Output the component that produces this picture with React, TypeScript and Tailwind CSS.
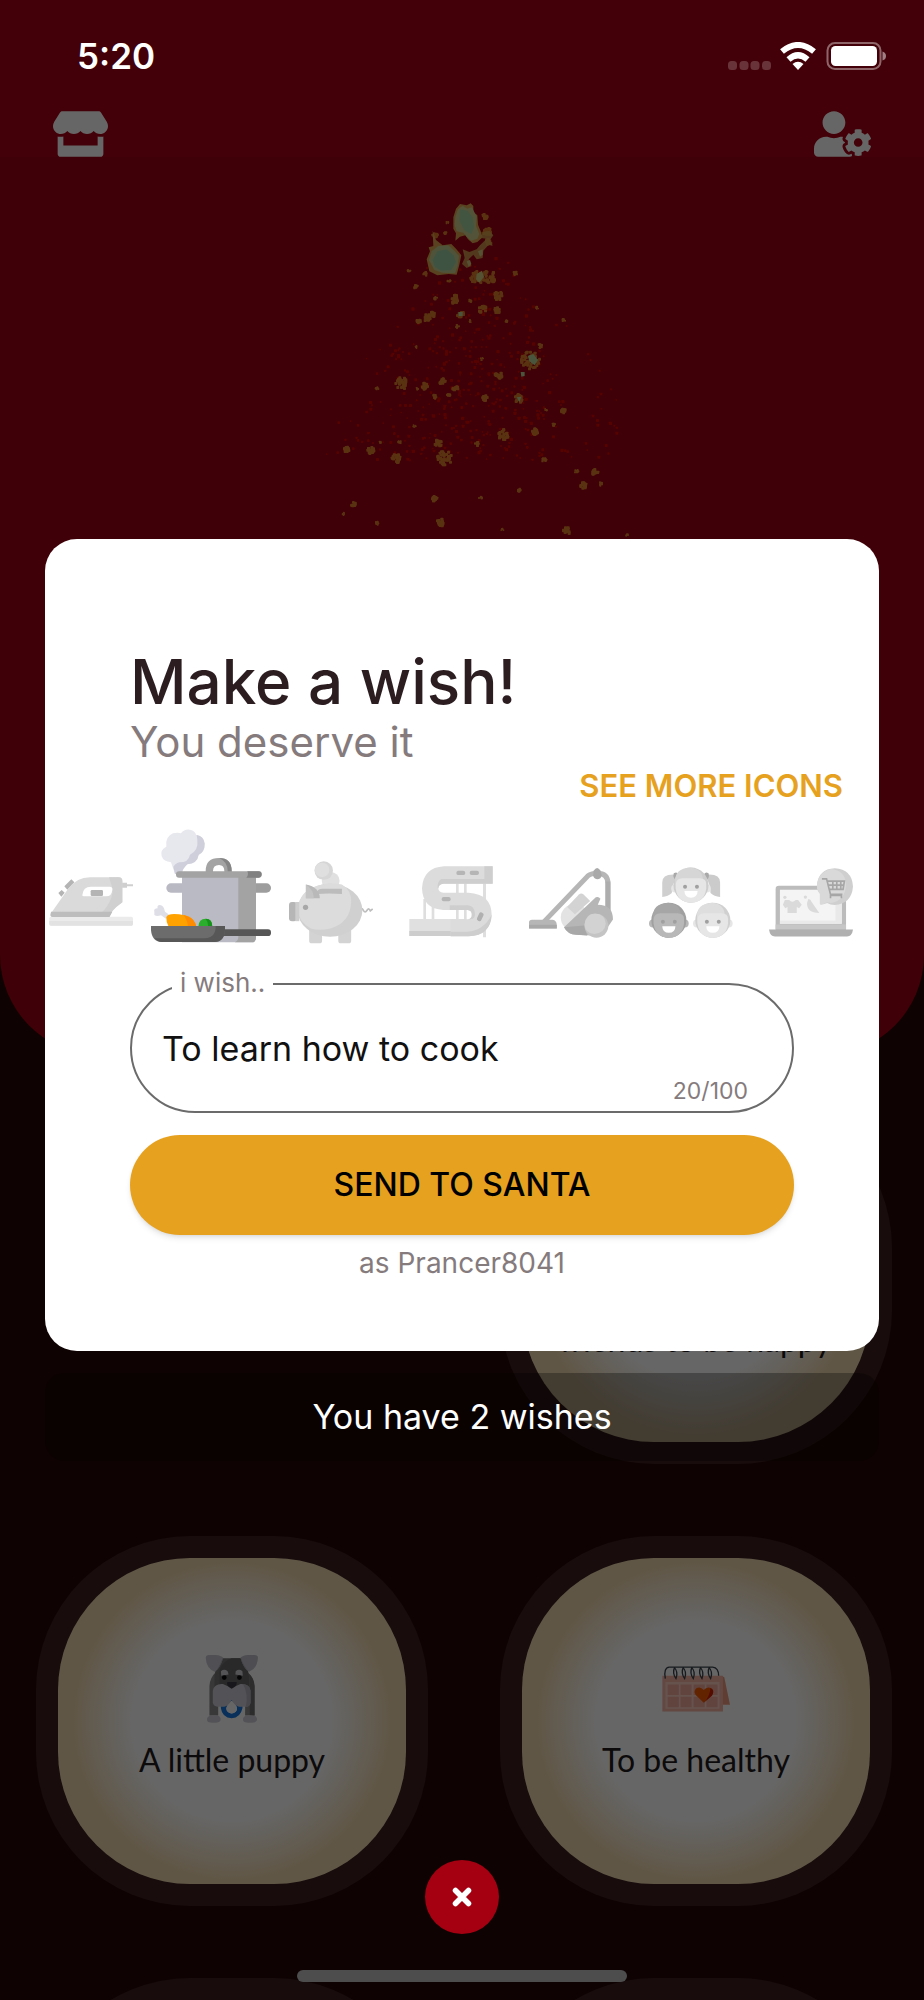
import { useState } from 'react';
import type { ReactNode } from 'react';
import { FaStore, FaUserCog } from 'react-icons/fa';

interface IconOption {
  id: string;
  label: string;
  icon: ReactNode;
}

interface Wish {
  id: number;
  text: string;
  icon?: ReactNode;
  className?: string;
  contentClassName?: string;
}

const MAX_LENGTH = 100;

/* ---------- Wish icons ---------- */

const IronIcon = () => (
  <svg viewBox="27 153 252 252" className="w-full">
    <rect x="28" y="323" width="251" height="27" rx="5" fill="#ebebeb" />
    <path d="M28 336h251v9q0 5-5 5H33q-5 0-5-5z" fill="#e2e2e2" />
    <path d="M245 221h16v5h18v6h-18v4h-16z" fill="#cfcfcf" />
    <path d="M55 252l10-9 9 8-10 12z M73 232l21-21 9 9-21 22z" fill="#b4b4b4" />
    <path d="M31 316L84 240Q110 205 150 205h86q11 0 11 11v64q-20 14-30 26l-9 18H38q-9 0-7-8z" fill="#dadada" />
    <path d="M207 205h29q11 0 11 11v64q-20 14-30 26l-9 18h-40q28-18 40-44 10-18 10-40z" fill="#d0d0d0" />
    <path d="M33 308h184l-9 16H38q-9 0-5-16z" fill="#bdbdbd" />
    <path d="M127 258q2-25 26-25h56q9 0 8 9-2 20-18 20h-67q-6 0-5-4z" fill="#fff" />
    <rect x="152" y="243" width="37" height="18" rx="4" fill="#b4b4b4" />
  </svg>
);

const PotIcon = () => (
  <svg viewBox="333 45 360 360" className="w-full">
    <path d="M405 195l-12-35q-22-2-28-18-5-20 14-29-4-30 20-40 14-4 24 0 12-15 30-10 12 4 15 14 22 3 26 26 2 25-18 35-4 24-34 28-14 12-17 29z" fill="#e7e7ee" />
    <path d="M470 78q22 4 24 26 0 25-18 33-4 27-34 29-14 12-17 29h-20l-5-22q10-12 18-13 28 0 32-23 26-12 22-44-1-9-2-15z" fill="#cfcfdb" />
    <path d="M497 192v-6q0-39 40-39 38 0 38 39v6h-22v-6q0-18-16-18-18 0-18 18v6z" fill="#a3a3a3" />
    <path d="M537 147q38 0 38 39v6h-12v-6q0-28-26-39z" fill="#848484" />
    <rect x="379" y="223" width="60" height="28" rx="14" fill="#b9b9c3" />
    <rect x="632" y="223" width="61" height="28" rx="14" fill="#9d9d9d" />
    <path d="M426 204h222v182q0 14-14 14H426z" fill="#babac5" />
    <path d="M595 204h53v182q0 14-14 14h-50q11-4 11-16z" fill="#a3a3a3" />
    <rect x="408" y="187" width="257" height="19" rx="9" fill="#a3a3a3" />
    <path d="M622 187h34q9 0 9 9t-9 10h-37q8-8 3-19z" fill="#818181" />
    <path d="M343 309q-3-11 10-11-3-9 6-10 8 0 13 10l3 10 11 8-7 14-16-11q-13 5-20-1z" fill="#dedee7" />
    <path d="M379 325q4-13 38-9 38 3 48 25 4 8 3 12h-82q-8-15-7-28z" fill="#ffa200" />
    <path d="M430 318q28 5 36 25 3 7 2 10h-24q-2-22-14-35z" fill="#ff8b00" />
    <path d="M475 353q1-24 22-24 20 0 20 24z" fill="#2bae2b" />
    <path d="M497 329q20 0 20 24h-12q0-14-8-24z" fill="#16921b" />
    <path d="M548 361h136q9 0 9 10t-9 10H548z" fill="#575757" />
    <path d="M333 351h222v12q-2 36-32 36H366q-30 0-33-36z" fill="#6c6c6c" />
    <path d="M527 351h28v12q-2 36-32 36H366q-14 0-22-11h150q34-2 33-37z" fill="#575757" />
  </svg>
);

const PiggyIcon = () => (
  <svg viewBox="747 153 254 252" className="w-full">
    <circle cx="873" cy="213" r="27" fill="#e0e0e0" />
    <circle cx="852" cy="182" r="28" fill="#d6d6d6" />
    <circle cx="847" cy="180" r="22" fill="#dfdfdf" />
    <path d="M959 302q8-10 13 0t11 0q6-9 10 2l7-6" fill="none" stroke="#bdbdbd" strokeWidth="5" />
    <path d="M808 355h39v39q0 8-8 8h-23q-8 0-8-8z M896 350h39v44q0 8-8 8h-23q-8 0-8-8z" fill="#d3d3d3" />
    <ellipse cx="871" cy="302" rx="98" ry="80" fill="#d0d0d0" />
    <path d="M773 300q4-62 74-76 32-6 60 0 30 18 28 54-3 64-66 80-32 6-56-1-36-18-40-57z" fill="#dcdcdc" />
    <path d="M831 252q0-15 18-15h58v16q-38-4-76 0z" fill="#bcbcbc" />
    <path d="M798 224q42 8 42 42h-42z" fill="#b9b9b9" />
    <path d="M798 224q24 16 24 42h-24z" fill="#c4c4c4" />
    <rect x="747" y="277" width="24" height="58" rx="9" fill="#b6b6b6" />
    <path d="M766 277h12v58h-12z" fill="#cdcdcd" />
    <circle cx="797" cy="293" r="8" fill="#a8a8a8" />
  </svg>
);

const SewingIcon = () => (
  <svg viewBox="1108 153 252 252" className="w-full">
    <path d="M1151 270h8v65h-8z M1176 290h8v45h-8z M1249 215h8v140h-8z M1273 215h8v120h-8z M1330 220h9v165h-9z" fill="#dedede" />
    <path d="M1109 330h166v51h-166z" fill="#e0e0e0" />
    <path d="M1109 366h166v15h-166z" fill="#cdcdcd" />
    <path d="M1211 172h148v52h-148q-15 2-15 14t15 13h76q68 4 69 66-3 62-69 65h-54v-51h52q13-1 13-14t-13-14h-74q-62-3-64-65 3-62 66-66z" fill="#dcdcdc" />
    <path d="M1334 172h25v52h-25z M1205 210h154v14h-148q-15 2-15 14h-2q-2-20 11-28z M1230 289h54q22 2 22 29-2 13-14 13h-9q13-1 13-14t-13-14h-53z M1283 368q50-4 73-51-3 62-69 65h-54v-14z" fill="#cecece" />
    <rect x="1206" y="264" width="27" height="13" rx="6" fill="#b5b5b5" />
    <path d="M1255 185h15q7 0 7 7t-7 6h-15q-5 0-5-6t5-7z" fill="#b5b5b5" />
    <rect x="1290" y="185" width="28" height="13" rx="6" fill="#b5b5b5" />
    <rect x="1315" y="310" width="14" height="27" rx="6" fill="#b0b0b0" transform="rotate(25 1322 323)" />
  </svg>
);

const VacuumIcon = () => (
  <svg viewBox="207 153 254 252" className="w-full">
    <path d="M252 337L384 199q10-9 29-9 33 0 33 32v95" fill="none" stroke="#b6b6b6" strokeWidth="15" />
    <path d="M438 215h15v102h-15z" fill="#adadad" />
    <path d="M403 182q10-16 20 0l4 14q-2 12-14 12-11-2-12-12z" fill="#a9a9a9" />
    <rect x="303" y="284" width="85" height="80" rx="40" fill="#e3e3e3" />
    <path d="M322 292l36-38q7-6 14 0l20 20-46 40z" fill="#d3d3d3" />
    <path d="M313 353l96-90q8-4 14 4l-8 18q46 0 46 45l-34 50-77-4q-26-1-37-23z" fill="#b6b6b6" />
    <path d="M313 353l60-5 10 30-33-2q-26-1-37-23z" fill="#a8a8a8" />
    <circle cx="411" cy="349" r="36" fill="#c4c4c4" />
    <path d="M375 346q2-33 32-34 30 2 32 30-2 28-34 32-28-2-30-28z" fill="#d2d2d2" />
    <path d="M207 339q0-8 9-8h62q13 2 13 16v10h-84z" fill="#b6b6b6" />
    <path d="M207 346h84v11h-84z" fill="#a8a8a8" />
  </svg>
);

interface FaceProps {
  x: number;
  y: number;
  skin: string;
  hair: string;
  shade: string;
}

const Face = ({ x, y, skin, hair, shade }: FaceProps) => (
  <g transform={`translate(${x} ${y})`}>
    <circle cx="-48" cy="10" r="12" fill={skin} />
    <circle cx="48" cy="10" r="12" fill={skin} />
    <circle r="53" fill={shade} />
    <path d="M-48-8q-2-43 46-45 38 4 38 40 0 50-38 66-46-4-46-61z" fill={hair} />
    <path d="M-46-4q2-16 20-17h52q20 1 20 17v14q-5 42-46 43-41-1-46-43z" fill={skin} />
    <circle cx="-18" cy="5" r="6" fill="#a0a0a0" />
    <circle cx="18" cy="5" r="6" fill="#a0a0a0" />
    <path d="M-20 18h40q-1 20-20 20t-20-20z" fill="#fff" />
  </g>
);

const KidsIcon = () => (
  <svg viewBox="567 153 254 252" className="w-full">
    <path d="M607 262v-44q0-24 32-24l14 4q-17 25-17 52-11 11-29 12z" fill="#cfcfcf" />
    <path d="M782 262v-44q0-24-32-24l-12 4q15 25 15 52 11 11 29 12z" fill="#cbcbcb" />
    <path d="M642 190q12-6 14 6l-10 14q-8-10-4-20z M747 190q-12-6-14 6l10 14q8-10 4-20z" fill="#a8a8a8" />
    <Face x={694} y={226} skin="#e6e6e6" hair="#d6d6d6" shade="#cdcdcd" />
    <Face x={627} y={332} skin="#b8b8b8" hair="#a6a6a6" shade="#a0a0a0" />
    <Face x={760} y={332} skin="#e6e6e6" hair="#dedede" shade="#d0d0d0" />
  </svg>
);

const LaptopIcon = () => (
  <svg viewBox="927 153 254 252" className="w-full">
    <path d="M947 238q0-10 10-10h193q10 0 10 10v124H947z" fill="#bcbcbc" />
    <path d="M960 240h187v103H960z" fill="#f4f4f4" />
    <path d="M1128 240h19v103H960v-10h168z" fill="#e9e9e9" />
    <path d="M947 345h213v15H947z" fill="#c6c6c6" />
    <path d="M927 360h254q-3 21-18 21H945q-15 0-18-21z" fill="#b0b0b0" />
    <path d="M975 271h13q9 10 20 0h7l11 14-8 11-7-4v18h-28v-18l-7 4-7-11z" fill="#dadada" />
    <path d="M1046 268q7 0 10 9l23 33q-38 0-37-30z" fill="#dadada" />
    <circle cx="975" cy="263" r="5" fill="#dadada" />
    <circle cx="1037" cy="262" r="5" fill="#dadada" />
    <path d="M1081 284v-32q-10-12-9-25 4-50 54-52 52 3 55 55-4 52-55 56-14 0-23-6-12 6-22 4z" fill="#cfcfcf" />
    <path d="M1081 284v-32q-10-12-9-25 3-40 42-50 44 4 46 47-2 50-46 56l-11-2q-12 8-22 6z" fill="#d9d9d9" />
    <path d="M1087 207h14l12 47h36 M1103 214h52l-4 25h-41 M1105 226h48 M1120 214v25 M1132 214v25 M1144 214v25 M1113 266v-9h33v9" fill="none" stroke="#a6a6a6" strokeWidth="5" />
  </svg>
);

const PuppyIcon = () => (
  <svg viewBox="596 464 202 202" className="size-[68px]">
    <path d="M630 644v-88q1-24 20-42h92q20 18 22 42v88h-28v-44h-80v44z" fill="#8c8c8c" />
    <path d="M748 520q15 14 16 36v88h-14z" fill="#6e6e6e" />
    <path d="M645 526q2-26 24-52h54q22 26 24 52v32h-102z" fill="#757575" />
    <path d="M660 526q-4-36 36-52h27q22 26 24 52v32h-87z" fill="#666666" />
    <path d="M619 474q-1-10 10-10 34-2 42 8-10 34-26 42-24-10-26-40z" fill="#c9c9d2" />
    <path d="M774 474q1-10-10-10-34-2-42 8 10 34 26 42 24-10 26-40z" fill="#c3c3cc" />
    <path d="M650 512q10-14 19-38 4-4 2-2-10 34-26 42z M724 474q10 28 24 40-16-8-26-42z" fill="#a9a9b1" />
    <path d="M664 512q10-8 20 0l3 10-22 4z M708 512q10-8 20 0l1 14-22-4z" fill="#d2d2da" />
    <circle cx="674" cy="531" r="7" fill="#0c0c0c" />
    <circle cx="719" cy="531" r="7" fill="#0c0c0c" />
    <path d="M696 588q36 6 32 34-6 28-32 30-28-2-32-30-2-28 32-34zm0 12q-14 10-16 24 2 13 16 14 14-1 16-14-2-14-16-24z" fill="#1478e0" fillRule="evenodd" />
    <path d="M696 600q-14 10-16 24 2 13 16 14 14-1 16-14-2-14-16-24z" fill="#fff" />
    <path d="M640 570q4-22 30-20l26 12 26-12q26-2 30 20v36q-2 12-14 12h-20q-12-2-22-20-10 18-22 20h-20q-12-2-14-12z" fill="#cfcfd9" />
    <path d="M730 551q20 1 22 19v36q-2 12-14 12 8-38-8-67z" fill="#b4b4be" />
    <path d="M683 544h28q2 12-15 20-17-8-13-20z" fill="#3d3a44" />
    <path d="M623 652q4-10 20-9 18-1 20 9v6q-2 8-20 7-20 1-20-7z M730 652q4-10 20-9 18-1 21 9v6q-2 8-21 7-20 1-20-7z" fill="#cfcfd9" />
  </svg>
);

const CalendarIcon = () => (
  <svg viewBox="602 464 202 202" className="size-[68px]">
    <path d="M779 526l8 4 17 82h-25z" fill="#f09a80" />
    <path d="M603 526h180v106H603z" fill="#f5b3a0" />
    <path d="M612 544h161v80H612z" fill="#ffcfc4" />
    <path d="M619 552h33v31h-33z M657 552h33v31h-33z M696 552h33v31h-33z M734 552h33v31h-33z M619 588h33v31h-33z M657 588h33v31h-33z M696 588h33v31h-33z M734 588h33v31h-33z" fill="#f2aa9c" />
    <path d="M612 534q-6-32 12-34h16q-8 18 4 34 8-20-6-34h28q-8 18 4 34 8-20-6-34h28q-8 18 4 34 8-20-6-34h28q-8 18 4 34 8-20-6-34h28q-8 18 4 34 8-20-6-34h12q18 2 18 26" transform="translate(6 0) scale(.99 1)" fill="none" stroke="#3a444c" strokeWidth="4" />
    <path d="M726 606l-24-23q-8-12 3-21 12-5 21 6 9-11 21-6 11 9 3 21z" fill="#f55a00" />
    <path d="M726 606q18-18 20-44 12 4 7 18-2 6-6 8z" fill="#d41c00" />
  </svg>
);

/* ---------- Tree of lights ---------- */

const BROWN_SPARKS = [
  [365, 610, 20], [433, 617, 11], [487, 603, 10], [524, 627, 10], [613, 653, 9], [655, 585, 12],
  [715, 655, 15], [750, 542, 32], [495, 832, 25], [474, 788, 12], [349, 834, 15], [272, 811, 11],
  [200, 808, 9], [670, 764, 17], [766, 754, 10], [851, 693, 8], [793, 840, 7], [946, 877, 11],
  [910, 915, 11], [963, 913, 6], [891, 875, 6], [463, 955, 9], [482, 1028, 13], [860, 1053, 12],
  [602, 955, 6], [220, 972, 8], [293, 1030, 6], [191, 1003, 5], [717, 931, 7], [592, 792, 7],
  [822, 736, 6], [525, 358, 15], [655, 347, 14], [608, 389, 13], [650, 391, 10], [541, 402, 11],
  [440, 412, 12], [460, 402, 9], [416, 424, 8], [408, 320, 7], [388, 274, 6], [467, 355, 6],
  [628, 290, 22], [590, 292, 22], [706, 281, 7], [680, 427, 6], [533, 440, 6], [851, 423, 6],
  [782, 498, 7], [772, 385, 5], [360, 788, 6], [301, 788, 5], [405, 740, 5], [293, 625, 6],
  [463, 650, 7], [506, 645, 7], [571, 425, 5], [669, 1051, 5], [1043, 1067, 5], [800, 690, 5],
  [437, 282, 7], [411, 503, 5], [607, 538, 5], [509, 305, 6], [570, 365, 6], [620, 155, 14],
  [616, 108, 9], [465, 165, 8], [625, 185, 10], [498, 160, 6], [503, 130, 5], [412, 628, 5],
];

// Small seeded generator so that the lights stay put between renders
const createRandom = (seed: number) => () => {
  seed = (seed * 16807) % 2147483647;
  return seed / 2147483647;
};

const random = createRandom(57);

const RED_SPECKS = Array.from({ length: 420 }, () => {
  const y = 200 + Math.sqrt(random()) * 640;
  const spread = 120 + (y - 200) * 0.68;
  return {
    x: Math.round(590 + (random() + random() - 1) * spread),
    y: Math.round(y),
    size: 5 + Math.round(random() * 5),
  };
});

const SPARK_BITS = BROWN_SPARKS.flatMap(([cx, cy, r]) =>
  Array.from({ length: Math.round(r * 1.4) }, () => {
    const angle = random() * Math.PI * 2;
    const distance = r * Math.sqrt(random()) * 0.9;
    return {
      x: Math.round(cx + Math.cos(angle) * distance - 4),
      y: Math.round(cy + Math.sin(angle) * distance - 4),
      size: Math.min(r, 9),
    };
  }),
);

const TreeOfLights = () => (
  <svg viewBox="0 0 1092 1080" className="w-[364px]" aria-hidden="true">
    <g fill="#e60a00" opacity="0.75">
      {RED_SPECKS.map((s, i) => <rect key={i} x={s.x} y={s.y} width={s.size} height={s.size} rx="2" />)}
    </g>
    <g fill="#ea9530" opacity="0.85">
      {SPARK_BITS.map((s, i) => <rect key={i} x={s.x} y={s.y} width={s.size} height={s.size} rx="2" />)}
    </g>
    <path d="M520 112l8-26 12-14 20 4 12-6 8 8v18l12 10 2 28 8 20 6 18-16 14-14 4-14-12-8-12-16 4-14 12 2-22-8-14z" fill="#dfa650" />
    <path d="M526 110l8-22 14-10 14 8 14-4 8 16 6 12-2 28 10 24-6 14-18 6-14-12-10-12-20-4-6-18z" fill="#cdd08e" />
    <path d="M540 88l22 4 16 20 4 30-8 20-20-10-16-30z" fill="#a6d4a0" />
    <path d="M440 238l10-24-4-12 14-4-2-46 10 28 20 16 26-4 14 14 16 20-6 28-8 30-24-2-34 4-24-12z" fill="#dfa650" />
    <path d="M447 240l8-26 20-16 30-2 18 16 14 16-4 30-8 22-38-2-24-8z" fill="#c4cf90" />
    <path d="M458 240l14-26 28-6 20 18 8 20-14 24-30 2-20-12z" fill="#9dd0a6" />
    <path d="M548 208l20 8 22-8 10-12 20-20-18-2 8-18 18-4 12 14-10 14 8 18-12-4-16 18-2 22-18 4-10-14-14 14 8 20-14 6-14-12 8-18z" fill="#d6a450" opacity="0.85" />
    <path d="M590 282l16-10 6 18-14 18-10-10z M594 214l14-6v16l-8 6z M560 244l10-4 4 12-8 8z" fill="#d2cd80" />
    <path d="M744 528l16-6 14 18-10 16-16-12z M722 576h12v12l-10 2z M536 396h12v12h-12z M710 652l14-2-6 16z" fill="#b7d496" />
  </svg>
);

/* ---------- Status bar ---------- */

const StatusBar = () => (
  <header className="flex h-28 items-center justify-between pl-[77px] pr-[38px]">
    <time className="text-[35px] font-semibold text-white">5:20</time>
    <svg viewBox="0 0 158 28" className="h-7 w-[158px]" aria-label="Wi-Fi connected, battery full" role="img">
      <g fill="#fff" opacity="0.2">
        <rect x="0" y="19" width="9" height="9" rx="3.500" />
        <rect x="11.500" y="19" width="9" height="9" rx="3.500" />
        <rect x="22.500" y="19" width="9" height="9" rx="3.500" />
        <rect x="34" y="19" width="9" height="9" rx="3.500" />
      </g>
      <g fill="none" stroke="#fff" strokeWidth="6">
        <path d="M54 9.500Q70-3.500 86 9.500" />
        <path d="M60.500 17.500Q70 9 79.500 17.500" />
      </g>
      <path d="M64.500 22q5.500-4.500 11 0L70 28z" fill="#fff" />
      <rect x="99.500" y="1" width="53" height="26" rx="7.500" fill="none" stroke="#fff" strokeOpacity="0.4" strokeWidth="2" />
      <rect x="103" y="4" width="46" height="20" rx="4.500" fill="#fff" />
      <path d="M154.500 9.500q3.500 1 3.500 4.500t-3.500 4.500z" fill="#fff" opacity="0.5" />
    </svg>
  </header>
);

/* ---------- Wish list ---------- */

const WishCard = ({ text, icon, className = '', contentClassName = '' }: Wish) => (
  <article className={`h-[370px] rounded-[154px] bg-white/10 p-[22px] ${className}`}>
    <div
      className={`flex h-full flex-col items-center justify-center gap-4 rounded-[132px] bg-[radial-gradient(circle,#ffffff_100px,#f0d7ad_160px)] pb-1.5 text-center ${contentClassName}`}
    >
      {icon}
      <p className="font-[Lato] text-[32px] leading-[42px] text-[#1f1a1b]">{text}</p>
    </div>
  </article>
);

const WISHES: Wish[] = [
  { id: 1, text: 'friends to be happy', className: 'col-start-2', contentClassName: 'pt-[128px]' },
  { id: 2, text: 'A little puppy', icon: <PuppyIcon /> },
  { id: 3, text: 'To be healthy', icon: <CalendarIcon /> },
  { id: 4, text: '' },
  { id: 5, text: '' },
];

const HomeScreen = () => (
  <div className="absolute inset-0 overflow-hidden bg-[#260505]">
    <section className="h-[1055px] overflow-hidden rounded-b-[100px] bg-[#9e0012]">
      <nav className="flex justify-between bg-[#a70214] px-[53px] pt-[111px] text-white">
        <button type="button" aria-label="Store">
          <FaStore className="h-[46px] w-[55px]" />
        </button>
        <button type="button" aria-label="Account settings">
          <FaUserCog className="h-[46px] w-[57px]" />
        </button>
      </nav>
      <div className="mt-[23px] flex justify-center">
        <TreeOfLights />
      </div>
    </section>
    <section className="mt-[39px] grid grid-cols-2 gap-[72px] pl-9 pr-8">
      {WISHES.map((wish) => (
        <WishCard key={wish.id} {...wish} />
      ))}
    </section>
  </div>
);

/* ---------- Wish dialog ---------- */

const ICON_OPTIONS: IconOption[] = [
  { id: 'iron', label: 'Iron', icon: <IronIcon /> },
  { id: 'cooking', label: 'Cooking', icon: <PotIcon /> },
  { id: 'savings', label: 'Savings', icon: <PiggyIcon /> },
  { id: 'sewing', label: 'Sewing', icon: <SewingIcon /> },
  { id: 'vacuum', label: 'Vacuum cleaner', icon: <VacuumIcon /> },
  { id: 'kids', label: 'Kids', icon: <KidsIcon /> },
  { id: 'shopping', label: 'Shopping', icon: <LaptopIcon /> },
];

const WishDialog = () => {
  const [wish, setWish] = useState('To learn how to cook');
  const [selected, setSelected] = useState('cooking');

  return (
    <section
      role="dialog"
      aria-labelledby="wish-title"
      className="overflow-hidden rounded-[32px] bg-white pb-[70px] pt-[107px]"
    >
      <div className="px-[85px]">
        <h1 id="wish-title" className="text-[62px] font-medium leading-[72px] text-[#2c1d21]">Make a wish!</h1>
        <p className="text-[42px] leading-[48px] text-[#857b7d]">You deserve it</p>
      </div>

      <div className="flex justify-end pr-9">
        <button type="button" className="text-[31px] font-semibold leading-10 text-[#e6a11f]">SEE MORE ICONS</button>
      </div>

      <div className="-ml-[14px] mt-[18px] flex items-end">
        {ICON_OPTIONS.map(({ id, label, icon }) => (
          <button
            key={id}
            type="button"
            aria-label={label}
            aria-pressed={id === selected}
            onClick={() => setSelected(id)}
            className={`w-[120px] shrink-0 ${id === selected ? '' : 'px-[18px]'}`}
          >
            {icon}
          </button>
        ))}
      </div>

      <form className="mt-[39px] px-[85px]" onSubmit={(e) => e.preventDefault()}>
        <div className="relative">
          <label htmlFor="wish" className="absolute -top-3.5 left-[42px] bg-white px-2 text-[26px] leading-7 text-[#857b7d]">
            i wish..
          </label>
          <input
            id="wish"
            type="text"
            maxLength={MAX_LENGTH}
            value={wish}
            onChange={(e) => setWish(e.target.value)}
            className="h-[130px] w-full rounded-full border-2 border-[#6b6b6b] px-[30px] text-[34px] text-[#111111] outline-none"
          />
          <span className="absolute bottom-1.5 right-[46px] text-[23px] leading-8 text-[#857b7d]">
            {wish.length}/{MAX_LENGTH}
          </span>
        </div>
        <button
          type="submit"
          className="mt-[22px] h-[100px] w-full rounded-full bg-[#e6a11f] text-[32px] font-medium text-black shadow-md"
        >
          SEND TO SANTA
        </button>
        <p className="mt-2.5 text-center text-[28px] leading-9 text-[#857b7d]">as Prancer8041</p>
      </form>
    </section>
  );
};

export default function App() {
  return (
    <div className="relative h-screen overflow-hidden font-[Inter,sans-serif]">
      <HomeScreen />
      <div className="absolute inset-0 bg-black/60" />

      <div className="relative flex h-full flex-col">
        <StatusBar />
        <main className="mt-[427px] flex flex-col gap-[22px] px-[45px]">
          <WishDialog />
          <p className="rounded-[20px] bg-black/30 py-5 text-center text-[34px] leading-[48px] text-white">
            You have 2 wishes
          </p>
        </main>
        <footer className="mt-auto flex flex-col items-center gap-9 pb-[18px]">
          <button
            type="button"
            aria-label="Close"
            className="flex size-[74px] items-center justify-center rounded-full bg-[#a50012]"
          >
            <svg viewBox="0 0 20 20" className="size-5" stroke="#fff" strokeWidth="5.500" strokeLinecap="round">
              <path d="M3.500 3.500l13 13M16.500 3.500l-13 13" />
            </svg>
          </button>
          <div className="h-3 w-[330px] rounded-full bg-[#4d4d4d]" />
        </footer>
      </div>
    </div>
  );
}
